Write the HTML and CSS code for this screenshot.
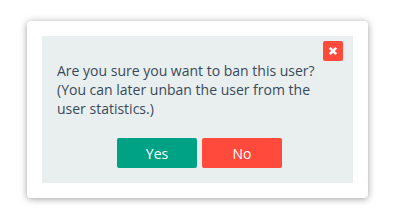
FILE: index.html
```html
<!DOCTYPE html>
<html>
<head>
<meta charset="utf-8">
<link rel="stylesheet" href="styles.css">
</head>
<body>
<div class="card">
  <div class="panel">
    <div class="panel-head">
      <button class="close" aria-label="Close">
        <svg width="10" height="10" viewBox="0 0 10 10"><path d="M1.8 1.8 L8.2 8.2 M8.2 1.8 L1.8 8.2" stroke="#fff" stroke-width="2.6" stroke-linecap="butt"/></svg>
      </button>
    </div>
    <p class="message">Are you sure you want to ban this user? (You can later unban the user from the user statistics.)</p>
    <div class="actions">
      <button class="btn btn-yes">Yes</button>
      <button class="btn btn-no">No</button>
    </div>
  </div>
</div>
</body>
</html>
```
FILE: styles.css
```css
html, body {
  margin: 0;
  padding: 0;
  background: #ffffff;
}
html {
  height: 220px;
}
body {
  box-sizing: border-box;
  min-height: 220px;
  padding: 21px 0 0 27px;
  font-family: "Open Sans", "Noto Sans", sans-serif;
}
.card {
  width: 311px;
  padding: 15px;
  background: #ffffff;
  border-radius: 4px;
  box-shadow: 0 1px 7px rgba(0, 0, 0, 0.38);
}
.panel {
  background: #e9efef;
  padding: 5px 10px 15px 15px;
  height: 127px;
}
.panel-head {
  display: flex;
  justify-content: flex-end;
}
.close {
  width: 20px;
  height: 20px;
  padding: 0;
  border: 0;
  border-radius: 2px;
  background: #ff4a3c;
  display: flex;
  align-items: center;
  justify-content: center;
}
.message {
  margin: 0;
  font-size: 14px;
  line-height: 19px;
  color: #384a5a;
  padding-right: 20px;
}
.actions {
  display: flex;
  gap: 5px;
  margin-top: 20px;
  padding-left: 60px;
}
.btn {
  width: 80px;
  height: 30px;
  border: 0;
  border-radius: 2px;
  font-family: "Open Sans", "Noto Sans", sans-serif;
  font-size: 14px;
  color: #ffffff;
  padding: 0;
}
.btn-yes {
  background: #00a286;
}
.btn-no {
  background: #ff4a3c;
}
```
